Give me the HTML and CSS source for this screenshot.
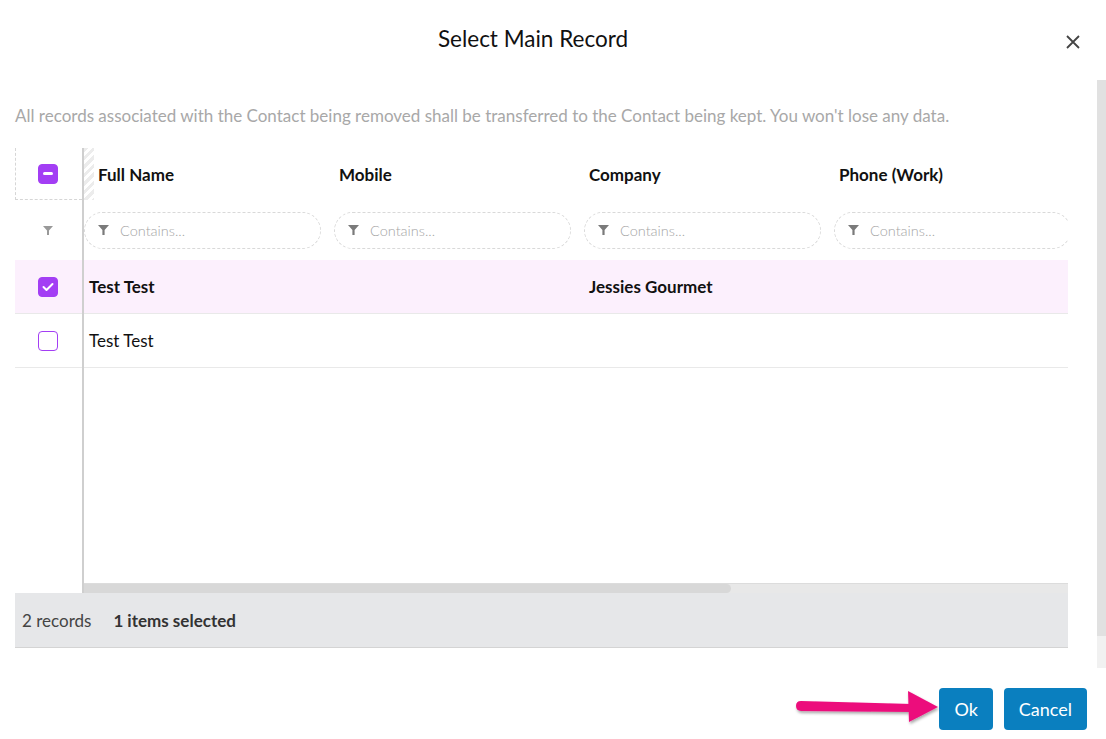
FILE: index.html
```html
<!DOCTYPE html>
<html lang="en">
<head>
    <meta charset="UTF-8">
    <meta name="viewport" content="width=device-width, initial-scale=1.0">
    <title>Select Main Record</title>
    <link rel="stylesheet" href="styles.css">
</head>
<body>
    <div class="dialog">
        <div class="dialog-header">
            <h1 class="dialog-title">Select Main Record</h1>
            <button class="close" aria-label="Close">
                <svg width="14" height="14" viewBox="0 0 14 14"><path d="M1 1 L13 13 M13 1 L1 13" stroke="#444" stroke-width="1.8" fill="none"/></svg>
            </button>
        </div>

        <div class="dialog-body">
            <div class="content">
                <p class="note">All records associated with the Contact being removed shall be transferred to the Contact being kept. You won't lose any data.</p>

                <div class="grid">
                    <div class="grid-main">
                        <div class="frozen">
                            <div class="f-head">
                                <span class="check check-mixed"><span class="dash"></span></span>
                            </div>
                            <div class="f-filter">
                                <svg width="10" height="9" viewBox="0 0 10 9"><path d="M0 0 H10 L6 4.5 V9 H4 V4.5 Z" fill="#999"/></svg>
                            </div>
                            <div class="f-row selected">
                                <span class="check check-on">
                                    <svg width="12" height="10" viewBox="0 0 12 10"><path d="M1.5 5 L4.5 8 L10.5 2" stroke="#fff" stroke-width="2" fill="none" stroke-linecap="round" stroke-linejoin="round"/></svg>
                                </span>
                            </div>
                            <div class="f-row">
                                <span class="check"></span>
                            </div>
                        </div>

                        <div class="scroll">
                            <div class="rows">
                                <div class="row head">
                                    <div class="cell first">Full Name</div>
                                    <div class="cell">Mobile</div>
                                    <div class="cell">Company</div>
                                    <div class="cell">Phone (Work)</div>
                                </div>
                                <div class="row filters">
                                    <div class="cell"><div class="filter"><svg width="11" height="10" viewBox="0 0 10 9"><path d="M0 0 H10 L6 4.5 V9 H4 V4.5 Z" fill="#7a7a7a"/></svg><span>Contains...</span></div></div>
                                    <div class="cell"><div class="filter"><svg width="11" height="10" viewBox="0 0 10 9"><path d="M0 0 H10 L6 4.5 V9 H4 V4.5 Z" fill="#7a7a7a"/></svg><span>Contains...</span></div></div>
                                    <div class="cell"><div class="filter"><svg width="11" height="10" viewBox="0 0 10 9"><path d="M0 0 H10 L6 4.5 V9 H4 V4.5 Z" fill="#7a7a7a"/></svg><span>Contains...</span></div></div>
                                    <div class="cell"><div class="filter"><svg width="11" height="10" viewBox="0 0 10 9"><path d="M0 0 H10 L6 4.5 V9 H4 V4.5 Z" fill="#7a7a7a"/></svg><span>Contains...</span></div></div>
                                </div>
                                <div class="row data selected">
                                    <div class="cell">Test Test</div>
                                    <div class="cell"></div>
                                    <div class="cell">Jessies Gourmet</div>
                                    <div class="cell"></div>
                                </div>
                                <div class="row data">
                                    <div class="cell">Test Test</div>
                                    <div class="cell"></div>
                                    <div class="cell"></div>
                                    <div class="cell"></div>
                                </div>
                            </div>
                            <div class="hscroll"><div class="hthumb"></div></div>
                        </div>
                    </div>

                    <div class="grid-footer">
                        <span class="count">2 records</span>
                        <span class="picked">1 items selected</span>
                    </div>
                </div>
            </div>
            <div class="vscroll"><div class="vthumb"></div></div>
        </div>

        <div class="dialog-actions">
            <button class="btn">Ok</button>
            <button class="btn">Cancel</button>
        </div>

        <svg class="pointer" width="160" height="50" viewBox="0 0 160 50">
            <defs>
                <filter id="shadow" x="-10%" y="-30%" width="130%" height="180%">
                    <feDropShadow dx="1" dy="2" stdDeviation="1.6" flood-color="#000" flood-opacity="0.35"/>
                </filter>
            </defs>
            <g filter="url(#shadow)">
                <path d="M9 13 L120 16 L120 24 L9 23 Q4 22.5 4 18 Q4 13 9 13 Z" fill="#ec0b7c"/>
                <path d="M116 3 L146 19 L117 34 Z" fill="#ec0b7c"/>
            </g>
        </svg>
    </div>
</body>
</html>
```

FILE: styles.css
```css
* {
    box-sizing: border-box;
}
body {
    margin: 0;
    background: #fff;
    font-family: Lato, "Open Sans", sans-serif;
    color: #111;
}
.dialog {
    position: relative;
    width: 1106px;
    height: 739px;
    display: flex;
    flex-direction: column;
    overflow: hidden;
}
.dialog-header {
    position: relative;
    height: 80px;
    display: flex;
    justify-content: center;
    padding: 25px 40px 0 0;
}
.dialog-title {
    margin: 0;
    font-size: 22.5px;
    font-weight: 400;
    line-height: 28px;
    color: #111;
}
.close {
    position: absolute;
    top: 35px;
    right: 26px;
    width: 14px;
    height: 14px;
    padding: 0;
    border: none;
    background: none;
    display: flex;
}

.dialog-body {
    display: flex;
    height: 588px;
}
.content {
    flex: 1;
    min-width: 0;
    padding-left: 15px;
    padding-right: 29px;
}
.note {
    margin: 24px 0 0;
    font-size: 17px;
    line-height: 24px;
    color: #a8a8a8;
    white-space: nowrap;
}
.vscroll {
    width: 9px;
    flex-shrink: 0;
    background: #f1f1f1;
}
.vthumb {
    height: 556px;
    background: #e1e1e1;
}

.grid {
    margin-top: 20px;
}
.grid-main {
    display: flex;
    height: 445px;
}
.frozen {
    width: 69px;
    border-right: 2px solid #cfcfcf;
    flex-shrink: 0;
}
.f-head {
    height: 52px;
    border-left: 1px dashed #d6d6d6;
    border-bottom: 1px dashed #d6d6d6;
    display: flex;
    align-items: center;
    justify-content: center;
    padding-right: 2px;
}
.f-filter {
    height: 60px;
    display: flex;
    align-items: center;
    justify-content: center;
    padding: 0 2px 0 0;
}
.f-row {
    height: 54px;
    border-bottom: 1px solid #e9e9e9;
    display: flex;
    align-items: center;
    justify-content: center;
    padding-right: 2px;
}
.f-row.selected {
    background: #fcf0fd;
}
.check {
    width: 20px;
    height: 20px;
    border-radius: 4px;
    border: 1.5px solid #a33ef4;
    background: #fff;
    display: flex;
    align-items: center;
    justify-content: center;
}
.check-mixed,
.check-on {
    background: #a33ef4;
}
.dash {
    width: 10px;
    height: 3px;
    border-radius: 2px;
    background: #fff;
}

.scroll {
    flex: 1;
    min-width: 0;
    display: flex;
    flex-direction: column;
    overflow: hidden;
}
.rows {
    flex: 1;
}
.row {
    display: flex;
    width: 1000px;
}
.cell {
    width: 250px;
    flex-shrink: 0;
    padding-left: 5px;
    display: flex;
    align-items: center;
}
.head {
    height: 52px;
    font-size: 17px;
    font-weight: 700;
    color: #111;
}
.head .first {
    padding-left: 14px;
    background: repeating-linear-gradient(135deg, #ececec 0 3px, #fff 3px 6px) no-repeat;
    background-size: 10px 100%;
}
.filters {
    height: 60px;
}
.filters .cell {
    padding-left: 0;
}
.filter {
    width: 237px;
    height: 37px;
    border: 1px dashed #d9d9d9;
    border-radius: 19px;
    display: flex;
    align-items: center;
    gap: 11px;
    padding-left: 13px;
    font-size: 14.5px;
    font-weight: 300;
    color: #a5a5a5;
}
.data {
    height: 54px;
    font-size: 17px;
    border-bottom: 1px solid #e9e9e9;
    width: 984px;
    overflow: hidden;
}
.data.selected {
    background: #fcf0fd;
    font-weight: 700;
}
.hscroll {
    height: 10px;
    background: #e8e8e8;
    border-top: 1px solid #dcdcdc;
}
.hthumb {
    width: 647px;
    height: 100%;
    background: #d8d8d8;
    border-radius: 0 5px 5px 0;
}

.grid-footer {
    height: 55px;
    background: #e6e7e9;
    border-bottom: 1px solid #d4d4d4;
    display: flex;
    align-items: center;
    gap: 22px;
    padding-left: 7px;
    font-size: 17px;
    color: #444;
}
.picked {
    font-weight: 700;
    color: #333;
}

.dialog-actions {
    display: flex;
    justify-content: flex-end;
    gap: 11px;
    padding: 20px 19px 0 0;
}
.btn {
    height: 42px;
    padding: 0 15px;
    border: none;
    border-radius: 4px;
    background: #0a7fbf;
    color: #fff;
    font-family: Lato, sans-serif;
    font-size: 18px;
}
.pointer {
    position: absolute;
    left: 792px;
    top: 688px;
}
```
